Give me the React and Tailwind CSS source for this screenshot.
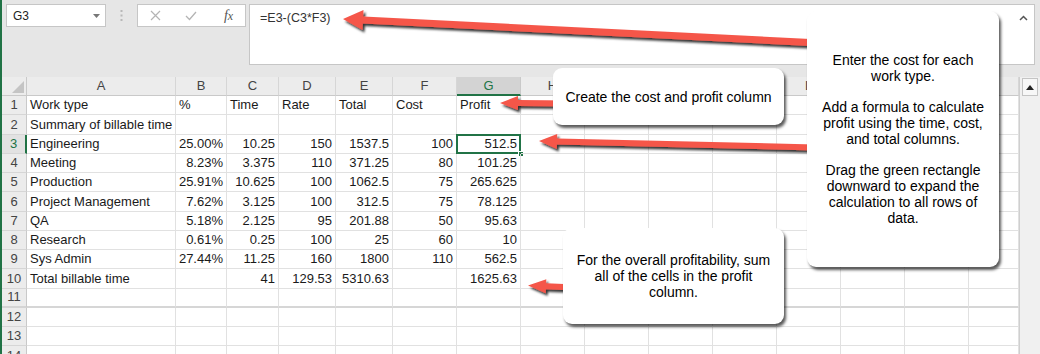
import React from "react";

const cols = [
  { k: "A", w: "w-[149px]" },
  { k: "B", w: "w-[51px]" },
  { k: "C", w: "w-[52px]" },
  { k: "D", w: "w-[57px]" },
  { k: "E", w: "w-[57px]" },
  { k: "F", w: "w-[64px]" },
  { k: "G", w: "w-[64px]" },
  { k: "H", w: "w-[64px]" },
  { k: "I", w: "w-[64px]" },
  { k: "J", w: "w-[64px]" },
  { k: "K", w: "w-[64px]" },
  { k: "L", w: "w-[64px]" },
  { k: "M", w: "w-[64px]" },
  { k: "N", w: "w-[64px]" },
  { k: "O", w: "w-[50px]" },
];

const data = [
  ["Work type", "%", "Time", "Rate", "Total", "Cost", "Profit"],
  ["Summary of billable time"],
  ["Engineering", "25.00%", "10.25", "150", "1537.5", "100", "512.5"],
  ["Meeting", "8.23%", "3.375", "110", "371.25", "80", "101.25"],
  ["Production", "25.91%", "10.625", "100", "1062.5", "75", "265.625"],
  ["Project Management", "7.62%", "3.125", "100", "312.5", "75", "78.125"],
  ["QA", "5.18%", "2.125", "95", "201.88", "50", "95.63"],
  ["Research", "0.61%", "0.25", "100", "25", "60", "10"],
  ["Sys Admin", "27.44%", "11.25", "160", "1800", "110", "562.5"],
  ["Total billable time", "", "41", "129.53", "5310.63", "", "1625.63"],
  [],
  [],
  [],
  [],
];

function arrowPts(x1, y1, x2, y2, w, hl, hw) {
  const dx = x2 - x1;
  const dy = y2 - y1;
  const len = Math.hypot(dx, dy);
  const ux = dx / len;
  const uy = dy / len;
  const nx = -uy;
  const ny = ux;
  const bx = x2 - ux * hl;
  const by = y2 - uy * hl;
  const p = [
    [x1 + (nx * w) / 2, y1 + (ny * w) / 2],
    [bx + (nx * w) / 2, by + (ny * w) / 2],
    [bx + (nx * hw) / 2, by + (ny * hw) / 2],
    [x2, y2],
    [bx - (nx * hw) / 2, by - (ny * hw) / 2],
    [bx - (nx * w) / 2, by - (ny * w) / 2],
    [x1 - (nx * w) / 2, y1 - (ny * w) / 2],
  ];
  return p.map((q) => q[0].toFixed(1) + "," + q[1].toFixed(1)).join(" ");
}

function Arrows() {
  const arrows = [
    [840, 44, 343, 19, 7, 20, 20],
    [570, 103.5, 500, 103, 6, 18, 14],
    [815, 147.5, 539, 141, 6, 18, 15],
    [575, 287.5, 528, 285.5, 6, 18, 14],
  ];
  return (
    <svg
      className="absolute left-0 top-0 pointer-events-none"
      width="1040"
      height="354"
      viewBox="0 0 1040 354"
    >
      <defs>
        <filter id="ash" x="-20%" y="-100%" width="140%" height="300%">
          <feDropShadow dx="2" dy="2.5" stdDeviation="1.3" floodColor="#000" floodOpacity="0.8" />
        </filter>
      </defs>
      {arrows.map((a, i) => (
        <polygon key={i} points={arrowPts(...a)} fill="#f5564a" filter="url(#ash)" />
      ))}
    </svg>
  );
}

function Callout({ className, children }) {
  return (
    <div
      className={
        "absolute bg-white rounded-[9px] shadow-[2px_3px_3px_rgba(0,0,0,0.65)] flex flex-col items-center justify-center text-center text-[14px] leading-[16px] text-black whitespace-nowrap " +
        className
      }
    >
      {children}
    </div>
  );
}

function TopBar() {
  return (
    <div className="h-[77px] flex items-start pt-[4px] pl-[4px] pr-[5px]">
      <div className="w-[100px] h-[23px] bg-white border border-[#c6c6c6] flex items-center justify-between pl-[6px] pr-[5px]">
        <span className="text-[12px] text-[#222]">G3</span>
        <svg width="7" height="4" viewBox="0 0 7 4">
          <polygon points="0,0 7,0 3.5,4" fill="#777" />
        </svg>
      </div>
      <div className="w-[31px] h-[23px] flex items-center justify-center">
        <svg width="3" height="11" viewBox="0 0 3 11">
          <rect x="0.5" y="0" width="2" height="2" fill="#b8b8b8" />
          <rect x="0.5" y="4.5" width="2" height="2" fill="#b8b8b8" />
          <rect x="0.5" y="9" width="2" height="2" fill="#b8b8b8" />
        </svg>
      </div>
      <div className="w-[109px] h-[23px] bg-white border border-[#c6c6c6] flex items-center">
        <div className="w-[32px] flex justify-center pl-[2px]">
          <svg width="11" height="11" viewBox="0 0 11 11">
            <path d="M1 1 L10 10 M10 1 L1 10" stroke="#b4b4b4" strokeWidth="1.2" fill="none" />
          </svg>
        </div>
        <div className="w-[42px] flex justify-center">
          <svg width="12" height="10" viewBox="0 0 12 10">
            <path d="M1 5 L4.5 8.5 L11 1" stroke="#b4b4b4" strokeWidth="1.3" fill="none" />
          </svg>
        </div>
        <div className="flex-1 flex justify-center">
          <span className="font-['Liberation_Serif',serif] italic text-[14px] text-[#555] leading-none">
            f<span className="text-[12px]">x</span>
          </span>
        </div>
      </div>
      <div className="ml-[3px] flex-1 h-[61px] bg-white border border-[#c6c6c6] flex justify-between pl-[10px] pr-[6px] pt-[4px]">
        <span className="text-[12.5px] text-[#333]">=E3-(C3*F3)</span>
        <svg width="9" height="6" viewBox="0 0 9 6" className="mt-[6px]">
          <path d="M1 5 L4.5 1.5 L8 5" stroke="#555" strokeWidth="1.5" fill="none" />
        </svg>
      </div>
    </div>
  );
}

function HeaderRow() {
  return (
    <div className="flex h-[19px]">
      <div className="w-[25px] shrink-0 bg-[#ececec] border-r border-b border-[#c9c9c9] relative">
        <svg width="12" height="12" viewBox="0 0 12 12" className="absolute right-[2px] bottom-[2px]">
          <polygon points="12,0 12,12 0,12" fill="#c4c4c4" />
        </svg>
      </div>
      {cols.map((c) => {
        const sel = c.k === "G";
        return (
          <div
            key={c.k}
            className={
              c.w +
              " shrink-0 flex items-center justify-center text-[13px] border-r " +
              (sel
                ? "bg-[#d3d3d3] border-[#c9c9c9] text-[#217346] border-b-2 border-b-[#217346]"
                : "bg-[#ececec] border-[#d6d6d6] text-[#444] border-b border-b-[#c9c9c9]")
            }
          >
            {c.k}
          </div>
        );
      })}
    </div>
  );
}

function isNum(v) {
  return /^[0-9.]+%?$/.test(v);
}

function DataRow({ idx, row }) {
  const n = idx + 1;
  const selRow = n === 3;
  const thick = n === 11;
  return (
    <div className="flex h-[19.25px] shrink-0">
      <div
        className={
          "w-[25px] shrink-0 flex items-center justify-center text-[13px] " +
          (thick ? "border-b-2 border-b-[#d4d4d4] " : "border-b border-b-[#d6d6d6] ") +
          (selRow
            ? "bg-[#e2e2e2] text-[#217346] border-r-2 border-r-[#217346]"
            : "bg-[#ececec] text-[#444] border-r border-r-[#c9c9c9]")
        }
      >
        {n}
      </div>
      {cols.map((c, ci) => {
        const v = row[ci] || "";
        const num = isNum(v) && n !== 1;
        const sel = selRow && c.k === "G";
        return (
          <div
            key={c.k}
            className={
              c.w +
              " shrink-0 relative flex items-center px-[3px] border-r border-r-[#e1e1e1] text-[13px] " +
              (thick ? "border-b-2 border-b-[#d6d6d6] " : "border-b border-b-[#e1e1e1] ") +
              (num ? "justify-end" : "justify-start") +
              " text-[#1a1a1a] whitespace-nowrap"
            }
          >
            {v}
            {sel && (
              <>
                <div className="absolute left-[-1px] top-[-1px] right-[-1px] bottom-[-1px] border-2 border-[#217346] pointer-events-none" />
                <div className="absolute right-[-4px] bottom-[-4px] w-[6px] h-[6px] bg-[#217346] border border-white" />
              </>
            )}
          </div>
        );
      })}
    </div>
  );
}

function Scrollbar() {
  return (
    <div className="w-[21px] shrink-0 bg-[#f0f0f0] border-l border-[#cfcfcf] flex flex-col items-center pt-[1px]">
      <div className="w-[16px] h-[18px] bg-[#f7f7f7] border border-[#c4c4c4] flex items-center justify-center">
        <svg width="8" height="5" viewBox="0 0 8 5">
          <polygon points="0,5 8,5 4,0" fill="#222" />
        </svg>
      </div>
    </div>
  );
}

export default function App() {
  return (
    <div className="w-[1040px] h-[354px] overflow-hidden relative bg-[#e6e6e6] flex font-['Liberation_Sans',Arial,sans-serif]">
      <div className="w-[2px] shrink-0 bg-[#217346]" />
      <div className="flex-1 flex flex-col min-w-0">
        <TopBar />
        <div className="flex flex-1 min-h-0">
          <div className="w-[1017px] shrink-0 flex flex-col bg-white">
            <HeaderRow />
            {data.map((r, i) => (
              <DataRow key={i} idx={i} row={r} />
            ))}
          </div>
          <Scrollbar />
        </div>
      </div>
      <Arrows />
      <Callout className="left-[807px] top-[11px] w-[192px] h-[256px]">
        <div>Enter the cost for each</div>
        <div>work type.</div>
        <div className="h-[15px]" />
        <div>Add a formula to calculate</div>
        <div>profit using the time, cost,</div>
        <div>and total columns.</div>
        <div className="h-[15px]" />
        <div>Drag the green rectangle</div>
        <div>downward to expand the</div>
        <div>calculation to all rows of</div>
        <div>data.</div>
      </Callout>
      <Callout className="left-[553px] top-[68px] w-[231px] h-[57px]">
        <div>Create the cost and profit column</div>
      </Callout>
      <Callout className="left-[563px] top-[228px] w-[221px] h-[96px]">
        <div>For the overall profitability, sum</div>
        <div>all of the cells in the profit</div>
        <div>column.</div>
      </Callout>
    </div>
  );
}
